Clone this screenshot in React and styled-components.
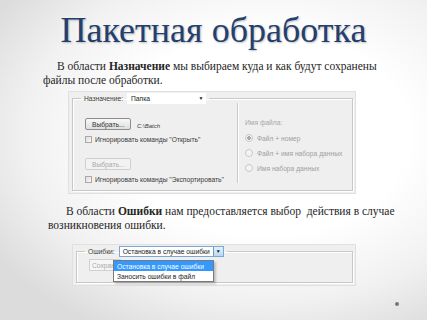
import styled, { createGlobalStyle } from "styled-components";

const GlobalStyle = createGlobalStyle`
  html, body { margin: 0; padding: 0; }
  body { width: 427px; height: 320px; overflow: hidden; }
`;

const Slide = styled.div`
  position: relative;
  width: 427px;
  height: 320px;
  box-sizing: border-box;
  overflow: hidden;
  background: radial-gradient(ellipse 75% 70% at 62% 42%, #ffffff 45%, #f1f1f1 75%, #dcdcdc 100%);
  font-family: "Liberation Serif", "DejaVu Serif", serif;
  display: flex;
  flex-direction: column;
`;

const Title = styled.h1`
  margin: 8px 0 0;
  height: 44px;
  text-align: center;
  font-family: "Liberation Serif", "DejaVu Serif", serif;
  font-weight: normal;
  font-size: 36px;
  line-height: 44px;
  color: #24406e;
  text-shadow: 1px 1px 2px rgba(0, 0, 0, 0.25), 0 0 6px #fff;
`;

const Para = styled.p`
  margin: ${(p) => p.$top}px 0 0 ${(p) => p.$left}px;
  width: ${(p) => p.$w}px;
  font-size: 11.5px;
  line-height: 14px;
  color: #262626;
  text-indent: ${(p) => p.$indent}px;
  b { font-weight: bold; }
`;

const Dialog = styled.div`
  position: relative;
  margin: ${(p) => p.$top}px 0 0 ${(p) => p.$left}px;
  width: ${(p) => p.$w}px;
  height: ${(p) => p.$h}px;
  box-sizing: border-box;
  background: #efefef;
  border: 1px solid #e0e0e0;
  padding: 0 2px 2px 3px;
  font-family: "Liberation Sans", Arial, sans-serif;
  font-size: 6.7px;
  color: #3a3a3a;
  white-space: nowrap;
  display: flex;
`;

const Group = styled.fieldset`
  flex: 1;
  margin: 0;
  padding: 0 0 0 12px;
  border: 1px solid #c8c8c8;
  box-shadow: 1px 1px 0 #fff, inset 1px 1px 0 #fff;
  min-width: 0;
`;

const Legend = styled.legend`
  margin-left: -4px;
  padding: 0 3px;
  display: flex;
  align-items: center;
  gap: 4px;
  height: 12px;
`;

const Select = styled.div`
  width: ${(p) => p.$w}px;
  height: 11px;
  box-sizing: border-box;
  background: #fff;
  border: 1px solid ${(p) => (p.$open ? "#7aa7d6" : "#fff")};
  padding-left: 3px;
  display: flex;
  align-items: center;
  justify-content: space-between;
  color: #222;
  overflow: hidden;
`;

const Arrow = styled.span`
  flex: none;
  font-size: 5px;
  width: ${(p) => (p.$boxed ? 9 : 8)}px;
  height: 100%;
  display: flex;
  align-items: center;
  justify-content: center;
  color: #222;
  ${(p) =>
    p.$boxed &&
    `background: linear-gradient(#e6f2fc, #b8d8f3); border-left: 1px solid #6c9ccf;`}
`;

const Columns = styled.div`
  display: flex;
  height: 80px;
`;

const LeftCol = styled.div`
  width: 152px;
  display: flex;
  flex-direction: column;
  padding-top: 14px;
`;

const Divider = styled.div`
  width: 1px;
  margin-top: -1px;
  height: 80px;
  background: #c8c8c8;
  box-shadow: 1px 0 0 #fff;
`;

const RightCol = styled.div`
  padding: 14px 0 0 7px;
  display: flex;
  flex-direction: column;
`;

const Button = styled.div`
  width: 46px;
  height: 12px;
  box-sizing: border-box;
  border: 1px solid ${(p) => (p.$disabled ? "#cfcfcf" : "#8e8e8e")};
  border-radius: 2px;
  background: ${(p) => (p.$disabled ? "#f2f2f2" : "linear-gradient(#f8f8f8, #dedede)")};
  color: ${(p) => (p.$disabled ? "#a8a8a8" : "#333")};
  display: flex;
  align-items: center;
  padding-left: 6px;
`;

const ButtonRow = styled.div`
  display: flex;
  align-items: center;
  gap: 6px;
  margin-top: ${(p) => p.$top || 0}px;
`;

const Path = styled.span`
  font-style: italic;
  font-size: 6px;
  margin-top: 4px;
`;

const Check = styled.div`
  display: flex;
  align-items: center;
  gap: 3px;
  height: 10px;
  margin-top: ${(p) => p.$top}px;
  &::before {
    content: "";
    flex: none;
    width: 7px;
    height: 7px;
    box-sizing: border-box;
    border: 1px solid #a8a8a8;
    background: linear-gradient(135deg, #dcdcdc, #fafafa);
  }
`;

const FieldLabel = styled.div`
  color: #a8a8a8;
  height: 10px;
  line-height: 10px;
  margin-bottom: 5px;
`;

const Radio = styled.div`
  display: flex;
  align-items: center;
  gap: 4px;
  height: 10px;
  margin-bottom: 5px;
  color: #a0a0a0;
  &::before {
    content: "";
    flex: none;
    width: 8px;
    height: 8px;
    box-sizing: border-box;
    border-radius: 50%;
    border: 1px solid #c8c8c8;
    background: ${(p) =>
      p.$checked
        ? "radial-gradient(circle, #a8a8a8 0 1.6px, #f4f4f4 2px)"
        : "#f4f4f4"};
  }
`;

const ErrorsBody = styled.div`
  padding: 2px 0 0 0;
`;

const Field = styled.div`
  width: 32px;
  height: 12px;
  box-sizing: border-box;
  border: 1px solid #d0d0d0;
  background: #f6f6f6;
  color: #a8a8a8;
  padding-left: 2px;
  display: flex;
  align-items: center;
  overflow: hidden;
`;

const Menu = styled.div`
  position: absolute;
  left: 40px;
  top: 15px;
  width: 101px;
  box-sizing: border-box;
  background: #fff;
  border: 1px solid #7a7a7a;
  box-shadow: 2px 2px 2px rgba(0, 0, 0, 0.2);
  z-index: 2;
`;

const MenuItem = styled.div`
  height: 10px;
  padding-left: 3px;
  display: flex;
  align-items: center;
  background: ${(p) => (p.$active ? "#3399ff" : "#fff")};
  color: ${(p) => (p.$active ? "#fff" : "#222")};
`;

const Dot = styled.div`
  position: absolute;
  left: 395px;
  top: 302px;
  width: 4px;
  height: 4px;
  border-radius: 50%;
  background: #777;
`;

export default function App() {
  return (
    <Slide>
      <GlobalStyle />
      <Title>Пакетная обработка</Title>
      <Para $top={7} $left={43} $indent={14} $w={345}>
        В области <b>Назначение</b> мы выбираем куда и как будут сохранены файлы после обработки.
      </Para>
      <Dialog $top={4} $left={68} $w={288} $h={103}>
        <Group>
          <Legend>
            <span>Назначение:</span>
            <Select $w={79}>
              <span>Папка</span>
              <Arrow>▼</Arrow>
            </Select>
          </Legend>
          <Columns>
            <LeftCol>
              <ButtonRow>
                <Button>Выбрать...</Button>
                <Path>C:\Batch</Path>
              </ButtonRow>
              <Check $top={4}>Игнорировать команды "Открыть"</Check>
              <ButtonRow $top={14}>
                <Button $disabled>Выбрать...</Button>
              </ButtonRow>
              <Check $top={4}>Игнорировать команды "Экспортировать"</Check>
            </LeftCol>
            <Divider />
            <RightCol>
              <FieldLabel>Имя файла:</FieldLabel>
              <Radio $checked>Файл + номер</Radio>
              <Radio>Файл + имя набора данных</Radio>
              <Radio>Имя набора данных</Radio>
            </RightCol>
          </Columns>
        </Group>
      </Dialog>
      <Para $top={10} $left={48} $indent={18} $w={370}>
        В области <b>Ошибки</b> нам предоставляется выбор&nbsp; действия в случае возникновения ошибки.
      </Para>
      <Dialog $top={12} $left={72} $w={284} $h={42}>
        <Group>
          <Legend>
            <span>Ошибки:</span>
            <Select $w={105} $open>
              <span>Остановка в случае ошибки</span>
              <Arrow $boxed>▼</Arrow>
            </Select>
          </Legend>
          <ErrorsBody>
            <Field>Сохранить</Field>
          </ErrorsBody>
          <Menu>
            <MenuItem $active>Остановка в случае ошибки</MenuItem>
            <MenuItem>Заносить ошибки в файл</MenuItem>
          </Menu>
        </Group>
      </Dialog>
      <Dot />
    </Slide>
  );
}
